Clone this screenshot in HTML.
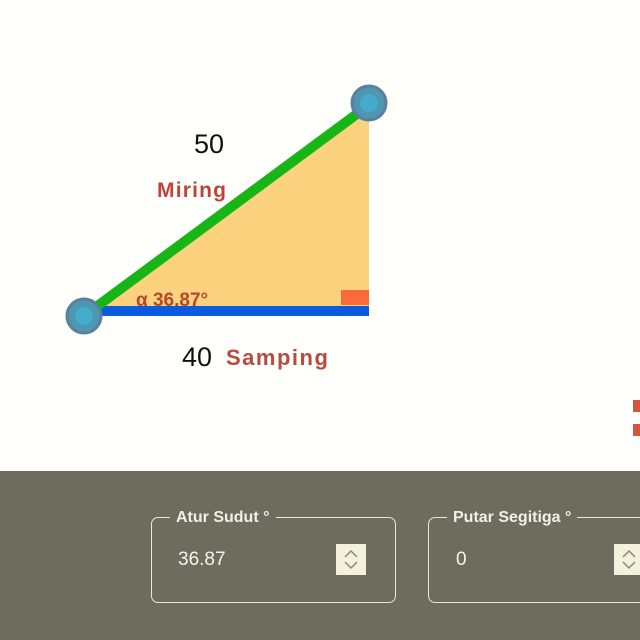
<!DOCTYPE html>
<html><head><style>
body{margin:0;width:640px;height:640px;overflow:hidden;background:#fffffb;font-family:"Liberation Sans",sans-serif;position:relative}
.panel{position:absolute;left:0;top:471px;width:640px;height:169px;background:#6d6c5e}
fieldset{position:absolute;border:1.5px solid #e8e8e0;border-radius:7px;margin:0;padding:0;box-sizing:border-box}
legend{color:#f0f0e8;font-size:16px;font-weight:bold;padding:0 6px;margin-left:18px;position:relative;top:1px}
.val{position:absolute;color:#f4f4ee;font-size:19px}
.spin{position:absolute;width:30px;height:31px;background:#f3f1dc}
</style></head><body>
<svg width="640" height="471" style="position:absolute;left:0;top:0">
<polygon points="85,312 369,105 369,312" fill="#fdd27e"/>
<rect x="341" y="290" width="28" height="15" fill="#fa6b3c"/>
<line x1="85" y1="311" x2="369" y2="311" stroke="#0a5be0" stroke-width="10"/>
<line x1="88" y1="313" x2="369" y2="105" stroke="#17b515" stroke-width="10"/>
<circle cx="84" cy="316" r="17" fill="#4f97b0" stroke="#5b7f9e" stroke-width="3"/>
<circle cx="84" cy="316" r="9" fill="#3fb5d6" opacity=".7"/>
<circle cx="369" cy="103" r="17" fill="#4f97b0" stroke="#5b7f9e" stroke-width="3"/>
<circle cx="369" cy="103" r="9" fill="#3fb5d6" opacity=".7"/>
<text x="194" y="153" font-size="27" fill="#111" font-family="Liberation Sans">50</text>
<text x="157" y="197" font-size="21" font-weight="bold" fill="#c0433a" font-family="Liberation Sans" letter-spacing="1.2">Miring</text>
<text x="136" y="306" font-size="19" font-weight="bold" fill="#b7462e" font-family="Liberation Sans">α 36.87°</text>
<text x="182" y="366" font-size="27" fill="#111" font-family="Liberation Sans">40</text>
<text x="226" y="365" font-size="22" font-weight="bold" fill="#b84a3e" font-family="Liberation Sans" letter-spacing="1.5">Samping</text>
<rect x="633" y="400" width="7" height="12" fill="#d8543f"/>
<rect x="633" y="424" width="7" height="12" fill="#d8543f"/>
</svg>
<div class="panel">
<fieldset style="left:151px;top:37px;width:245px;height:95px"><legend>Atur Sudut °</legend></fieldset>
<div class="val" style="left:178px;top:78px">36.87</div>
<div class="spin" style="left:336px;top:73px"><svg width="30" height="31"><path d="M9 13 L15 7 L21 13 M9 18 L15 24 L21 18" fill="none" stroke="#888" stroke-width="1.5"/></svg></div>
<fieldset style="left:428px;top:37px;width:240px;height:95px"><legend>Putar Segitiga °</legend></fieldset>
<div class="val" style="left:456px;top:78px">0</div>
<div class="spin" style="left:614px;top:73px"><svg width="30" height="31"><path d="M9 13 L15 7 L21 13 M9 18 L15 24 L21 18" fill="none" stroke="#888" stroke-width="1.5"/></svg></div>
</div>
</body></html>
